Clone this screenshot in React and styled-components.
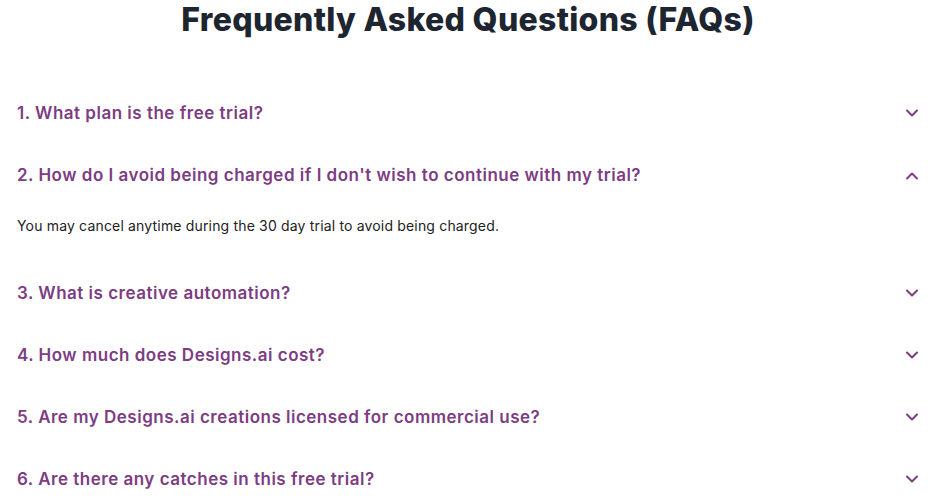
import React, { useState } from "react";
import styled, { createGlobalStyle } from "styled-components";

const Global = createGlobalStyle`
  body { margin: 0; background: #fff; font-family: "Inter", "Open Sans", sans-serif; }
`;

const Page = styled.div`
  width: 936px;
  padding: 0 17px;
  box-sizing: border-box;
`;

const Title = styled.h1`
  margin: 0 0 42px;
  text-align: center;
  font-family: "Inter", sans-serif;
  font-weight: 800;
  font-size: 32px;
  line-height: 40px;
  color: #1d2530;
  letter-spacing: 0.3px;
`;

const List = styled.div`
  display: flex;
  flex-direction: column;
`;

const Header = styled.button`
  all: unset;
  box-sizing: border-box;
  width: 100%;
  height: 62px;
  display: flex;
  align-items: center;
  justify-content: space-between;
  cursor: pointer;
  padding-right: 0;
`;

const Question = styled.span`
  font-family: "Inter", sans-serif;
  font-weight: 600;
  font-size: 17px;
  color: #7c3d82;
  letter-spacing: 0.5px;
`;

const Answer = styled.div`
  padding: 10px 0 26px;
  font-family: "Inter", sans-serif;
  font-size: 14px;
  line-height: 20px;
  color: #222;
  letter-spacing: 0.17px;
`;

const Chevron = ({ up }) => (
  <svg width="14" height="9" viewBox="0 0 14 9" fill="none">
    <path
      d={up ? "M2 7.5 L7 2.5 L12 7.5" : "M2 1.5 L7 6.5 L12 1.5"}
      stroke="#7c3d82"
      strokeWidth="2"
      strokeLinecap="round"
      strokeLinejoin="round"
    />
  </svg>
);

const faqs = [
  { q: "1. What plan is the free trial?", a: "" },
  {
    q: "2. How do I avoid being charged if I don't wish to continue with my trial?",
    a: "You may cancel anytime during the 30 day trial to avoid being charged.",
  },
  { q: "3. What is creative automation?", a: "" },
  { q: "4. How much does Designs.ai cost?", a: "" },
  { q: "5. Are my Designs.ai creations licensed for commercial use?", a: "" },
  { q: "6. Are there any catches in this free trial?", a: "" },
];

export default function App() {
  const [open, setOpen] = useState(1);
  return (
    <Page>
      <Global />
      <Title>Frequently Asked Questions (FAQs)</Title>
      <List>
        {faqs.map((f, i) => (
          <div key={i}>
            <Header onClick={() => setOpen(open === i ? -1 : i)}>
              <Question>{f.q}</Question>
              <Chevron up={open === i} />
            </Header>
            {open === i && <Answer>{f.a}</Answer>}
          </div>
        ))}
      </List>
    </Page>
  );
}
